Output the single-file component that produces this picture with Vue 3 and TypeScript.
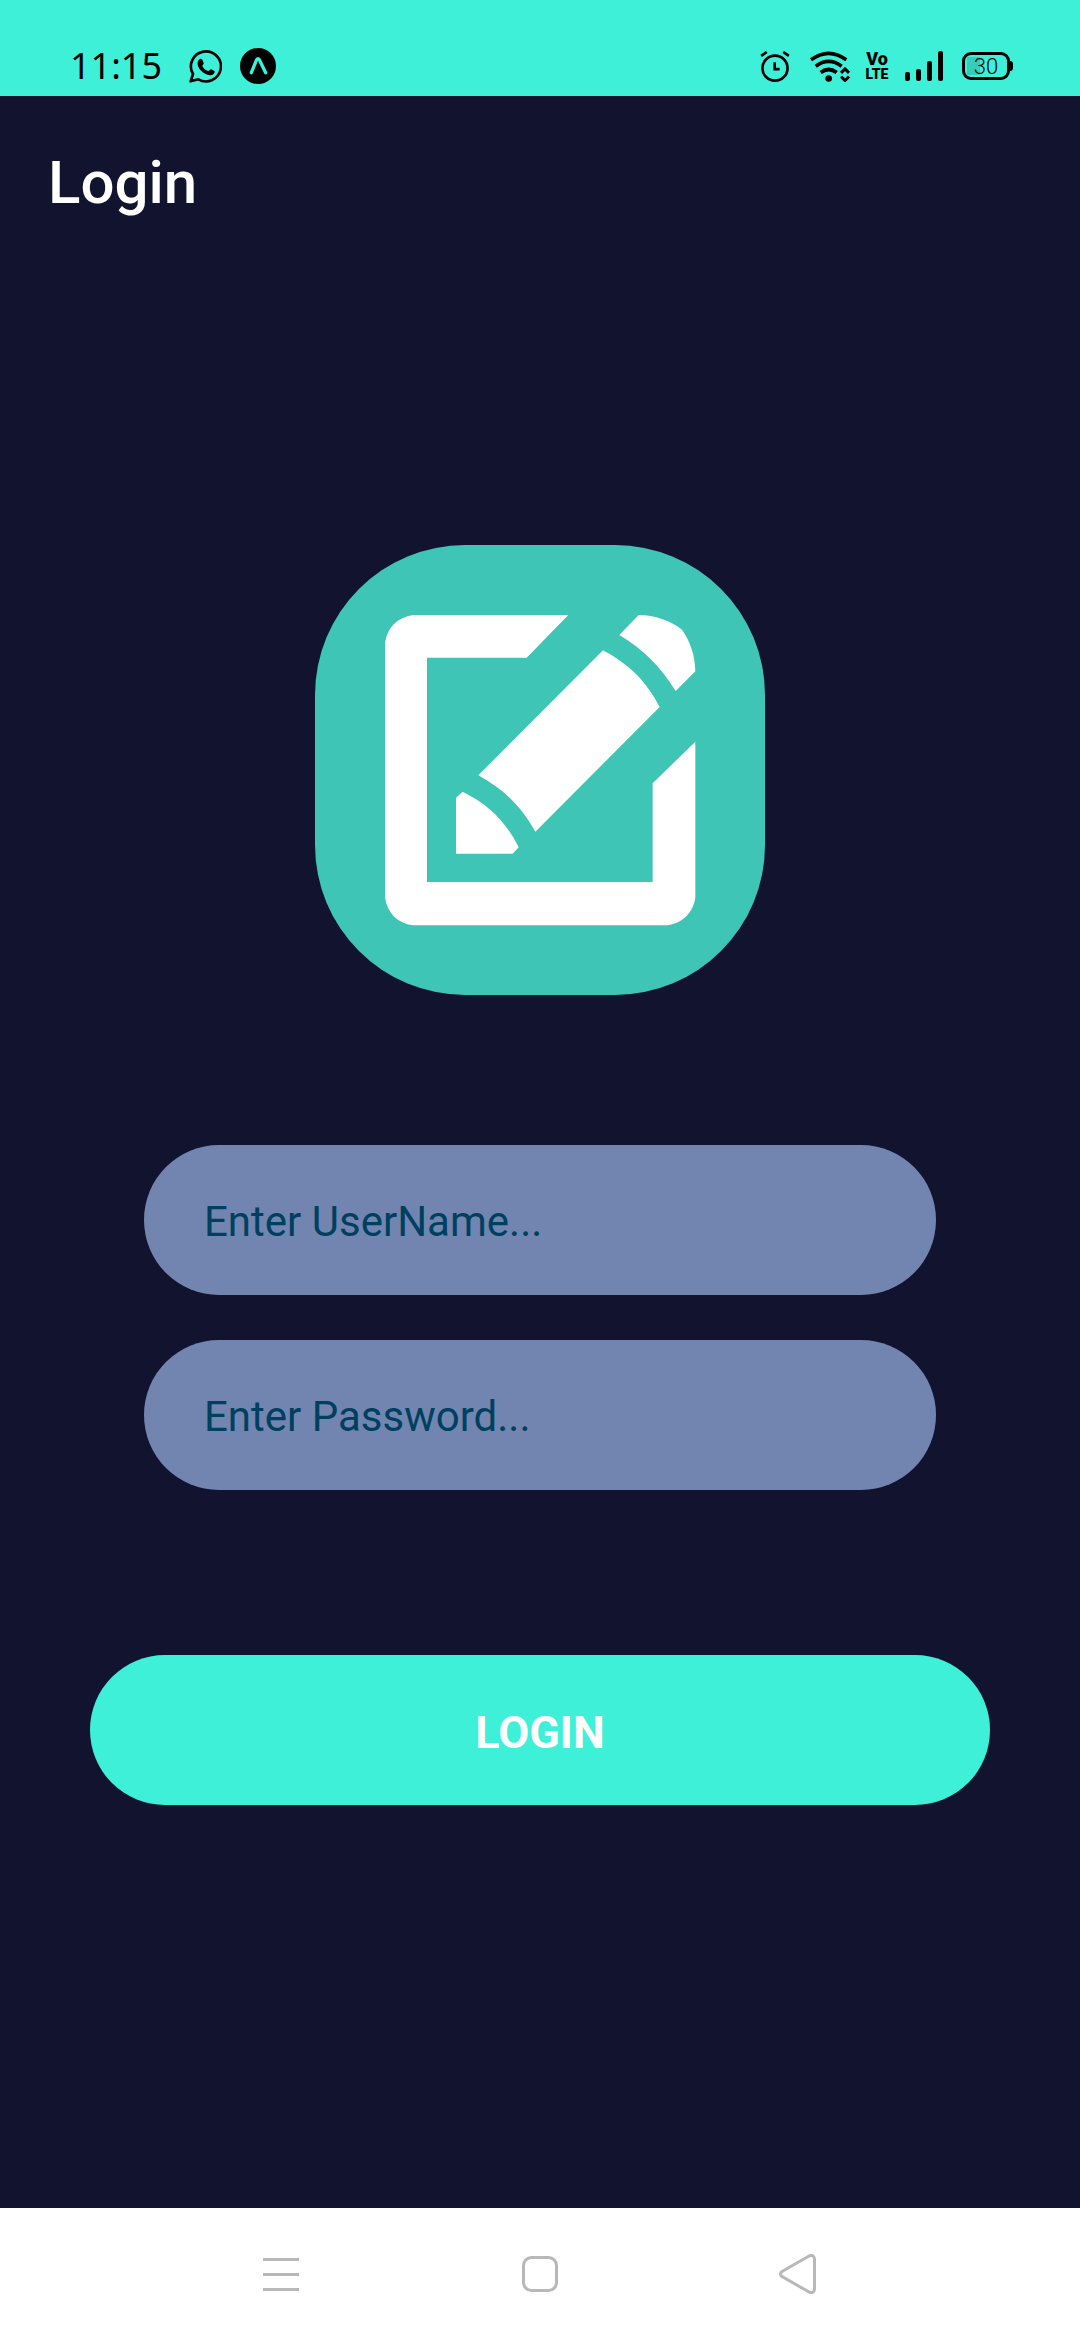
<script setup lang="ts">
import { ref } from 'vue'

const username = ref('')
const password = ref('')
const signalBars = [9, 12, 20, 30]
</script>

<template>
  <div class="app">
    <div class="status">
      <div class="status-left">
        <span class="time">11:15</span>
        <svg class="whatsapp" viewBox="0 0 99 99" width="33" height="33" aria-hidden="true">
          <path d="M5 94L12 72A45 45 0 1 1 28 88Z" fill="none" stroke="#000" stroke-width="8" stroke-linejoin="round" />
          <path d="M28 32C32 25 37 25 40 29L44 39C45 43 39 45 40 49C44 56 50 61 57 63C61 64 63 57 67 58L76 63C79 66 75 73 68 75C58 78 44 71 35 61C27 52 23 40 28 32Z" />
        </svg>
        <svg viewBox="0 0 108 108" width="36" height="36" aria-hidden="true">
          <circle cx="54" cy="54" r="54" />
          <path d="M34 74L50 35Q54 29 58 35L77 74" fill="none" stroke="#3ef0d8" stroke-width="10" stroke-linecap="round" stroke-linejoin="round" />
        </svg>
      </div>
      <div class="status-right">
        <svg class="alarm" viewBox="0 0 90 94" width="30" height="31" aria-hidden="true">
          <g fill="none" stroke="#000" stroke-width="8">
            <circle cx="45" cy="52" r="38" />
            <path d="M3 15L20 3M70 3L87 15" />
            <path d="M44 34V55H59" />
          </g>
        </svg>
        <svg class="wifi" viewBox="0 0 120 92" width="40" height="31" aria-hidden="true">
          <g fill="none" stroke="#000" stroke-width="11">
            <path d="M3 26Q56 -13 109 26" />
            <path d="M17 45Q56 16 95 45" />
            <path d="M32 64Q56 46 80 64" />
          </g>
          <circle cx="56" cy="82" r="10" />
          <path d="M93 65L105 53L117 65M93 76L105 88L117 76" fill="none" stroke="#000" stroke-width="9" />
        </svg>
        <span class="volte"><span class="vo">Vo</span><span>LTE</span></span>
        <span class="signal" aria-hidden="true">
          <i v-for="h in signalBars" :key="h" :style="{ height: h + 'px' }"></i>
        </span>
        <span class="battery"><span>30</span></span>
      </div>
    </div>

    <header class="header"><h1>Login</h1></header>

    <main class="main">
      <svg class="logo" viewBox="45 45 1350 1350" width="450" height="450" role="img" aria-label="Notes">
        <rect x="45" y="45" width="1350" height="1350" rx="450" fill="#3fc5b5" />
        <g fill="#fff">
          <path d="M339 255H805L680 383H381V1056H1058V760L1186 635V1102C1180 1148 1148 1180 1102 1186H339C292 1180 262 1150 255 1102V339C262 292 292 262 339 255Z" />
          <path d="M1016 255C1065 256 1110 271 1146 299C1172 337 1185 376 1186 424L1127 483C1080 408 1030 358 958 315Z" />
          <path d="M909 361C990 405 1038 453 1079 531L706 905C663 828 612 778 535 736Z" />
          <path d="M488 785C565 823 618 875 656 952L638 971H468V803Z" />
        </g>
      </svg>
      <form class="form" @submit.prevent>
        <input v-model="username" class="field" type="text" aria-label="Username" placeholder="Enter UserName..." />
        <input v-model="password" class="field" type="password" aria-label="Password" placeholder="Enter Password..." />
        <button class="submit" type="submit">LOGIN</button>
      </form>
    </main>

    <nav class="nav" aria-label="System">
      <button type="button" aria-label="Recent apps">
        <svg viewBox="0 0 40 40" width="40" height="40"><path d="M2 5.500H38M2 20.500H38M2 35.500H38" /></svg>
      </button>
      <button type="button" aria-label="Home">
        <svg viewBox="0 0 40 40" width="40" height="40"><rect x="3.500" y="3.500" width="33" height="33" rx="8" /></svg>
      </button>
      <button type="button" aria-label="Back">
        <svg viewBox="0 0 40 40" width="40" height="40"><path d="M3 17.500L30 2Q35 0 35.500 5V35Q35 40 30 38L3 22.500Q0 20 3 17.500Z" /></svg>
      </button>
    </nav>
  </div>
</template>

<style>
body {
  margin: 0;
  background: #12132f;
}
</style>

<style scoped>
.app {
  display: flex;
  flex-direction: column;
  min-height: 100vh;
  background: #12132f;
  font-family: Roboto, sans-serif;
}
.status {
  display: flex;
  justify-content: space-between;
  align-items: center;
  box-sizing: border-box;
  height: 96px;
  padding: 36px 67px 0 70px;
  background: #3ef0d8;
  color: #000;
}
.status svg {
  display: block;
}
.status-left,
.status-right {
  display: flex;
  align-items: center;
}
.time {
  font-family: "Noto Sans", sans-serif;
  font-size: 36px;
  line-height: 60px;
}
.whatsapp {
  margin: 0 18px 0 27px;
}
.wifi {
  margin: 0 16px 0 20px;
}
.volte {
  display: flex;
  flex-direction: column;
  align-items: center;
  justify-content: center;
  width: 22px;
  font-size: 14px;
  font-weight: 900;
  line-height: 14px;
}
.vo {
  font-size: 18px;
  line-height: 16px;
}
.signal {
  display: flex;
  align-items: flex-end;
  gap: 6px;
  margin: 0 19px 0 17px;
}
.signal i {
  width: 5px;
  border-radius: 2px;
  background: #000;
}
.battery {
  position: relative;
  box-sizing: border-box;
  width: 48px;
  height: 28px;
  margin-right: 3px;
  border: 3px solid #000;
  border-radius: 9px;
  background: linear-gradient(#36cdba, #36cdba) 2px 2px / 13px 18px no-repeat;
  font-size: 22px;
  font-weight: 300;
  line-height: 24px;
  text-align: center;
}
.battery::after {
  content: "";
  position: absolute;
  top: 6px;
  right: -6px;
  width: 3px;
  height: 10px;
  border-radius: 0 3px 3px 0;
  background: #000;
}
.header {
  display: flex;
  align-items: center;
  box-sizing: border-box;
  height: 168px;
  padding: 6px 48px 0;
}
.header h1 {
  margin: 0;
  color: #fff;
  font-size: 60px;
  font-weight: 500;
  line-height: 72px;
}
.main {
  display: flex;
  flex: 1;
  flex-direction: column;
  align-items: center;
  padding: 281px 90px 150px;
}
.logo {
  display: block;
}
.form {
  display: flex;
  flex-direction: column;
  align-items: center;
  width: 100%;
  margin-top: 150px;
}
.field {
  box-sizing: border-box;
  width: 88%;
  height: 150px;
  margin: 0 0 45px;
  padding: 2px 60px 0;
  border: 0;
  border-radius: 75px;
  outline: 0;
  background: #7285b1;
  color: #00405f;
  font: 400 42px Roboto, sans-serif;
}
.field::placeholder {
  color: #00405f;
  opacity: 1;
}
.submit {
  width: 100%;
  height: 150px;
  margin-top: 120px;
  padding: 4px 0 0;
  border: 0;
  border-radius: 75px;
  background: #3ef0d8;
  color: #fcfcfc;
  font: 700 45px Roboto, sans-serif;
}
.nav {
  display: flex;
  justify-content: center;
  height: 132px;
  background: #fff;
}
.nav button {
  display: flex;
  align-items: center;
  justify-content: center;
  width: 24%;
  padding: 0;
  border: 0;
  background: none;
}
.nav svg {
  fill: none;
  stroke: #b8b8b8;
  stroke-width: 3;
}
</style>
